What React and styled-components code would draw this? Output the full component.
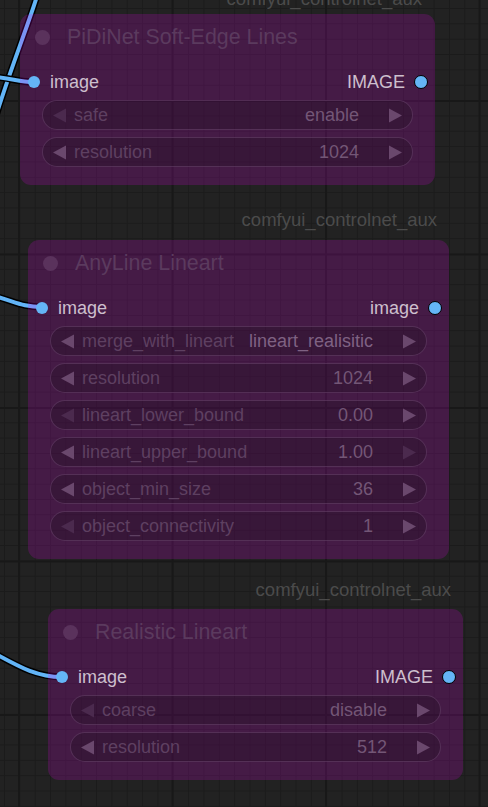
import React from "react";
import styled, { createGlobalStyle } from "styled-components";

const GlobalStyle = createGlobalStyle`
  html, body {
    margin: 0;
    padding: 0;
    background: #222222;
    overflow: hidden;
  }
  * { box-sizing: border-box; }
`;

const nodes = [
  {
    left: 20,
    top: 14,
    width: 415,
    title: "PiDiNet Soft-Edge Lines",
    output: "IMAGE",
    widgets: [
      { label: "safe", value: "enable", leftOff: true },
      { label: "resolution", value: "1024" },
    ],
  },
  {
    left: 28,
    top: 240,
    width: 421,
    title: "AnyLine Lineart",
    output: "image",
    widgets: [
      { label: "merge_with_lineart", value: "lineart_realisitic", bright: true },
      { label: "resolution", value: "1024" },
      { label: "lineart_lower_bound", value: "0.00", leftOff: true },
      { label: "lineart_upper_bound", value: "1.00", rightOff: true },
      { label: "object_min_size", value: "36" },
      { label: "object_connectivity", value: "1", leftOff: true },
    ],
  },
  {
    left: 48,
    top: 609,
    width: 415,
    title: "Realistic Lineart",
    output: "IMAGE",
    widgets: [
      { label: "coarse", value: "disable", leftOff: true },
      { label: "resolution", value: "512" },
    ],
  },
];

const Canvas = styled.div`
  position: relative;
  width: 488px;
  height: 807px;
  overflow: hidden;
  font-family: "Liberation Sans", Arial, sans-serif;
  background-color: #222222;
  background-image:
    linear-gradient(to right, #181818 0 2px, transparent 2px),
    linear-gradient(to bottom, #181818 0 2px, transparent 2px),
    linear-gradient(to right, #1b1b1b 0 1px, transparent 1px),
    linear-gradient(to bottom, #1b1b1b 0 1px, transparent 1px);
  background-size: 153.5px 153.5px, 153.5px 153.5px, 15.35px 15.35px,
    15.35px 15.35px;
  background-position: 18px 0, 0 100px, 4px 0, 0 8px;
`;

const Wires = styled.svg`
  position: absolute;
  inset: 0;
  width: 488px;
  height: 807px;
`;

const GroupLabel = styled.div`
  position: absolute;
  font-size: 18.5px;
  color: #4b4b4b;
  white-space: nowrap;
  transform: translateY(-50%);
`;

const Node = styled.div`
  position: absolute;
  border-radius: 11px;
  background: rgba(235, 0, 240, 0.18);
  padding: 0 22px 18px 22px;
  display: flex;
  flex-direction: column;
`;

const TitleBar = styled.div`
  height: 46px;
  display: flex;
  align-items: center;
  gap: 17px;
  margin-left: -7px;
`;

const TitleDot = styled.span`
  width: 15px;
  height: 15px;
  border-radius: 50%;
  background: #5a325c;
  flex: none;
`;

const TitleText = styled.span`
  font-size: 21.4px;
  color: #5b3a5e;
  white-space: nowrap;
`;

const SlotRow = styled.div`
  position: relative;
  height: 40px;
  padding-top: 4px;
  display: flex;
  align-items: center;
  justify-content: space-between;
  font-size: 18px;
  color: #cdbfcd;
`;

const SlotDot = styled.span`
  position: absolute;
  top: calc(50% + 2px);
  width: ${(p) => (p.out ? 14 : 12)}px;
  height: ${(p) => (p.out ? 14 : 12)}px;
  border-radius: 50%;
  background: #64b5f6;
  border: ${(p) => (p.out ? "1.5px solid #000" : "none")};
  transform: translate(-50%, -50%);
  left: ${(p) => (p.out ? "calc(100% + 8px)" : "-8px")};
`;

const SlotLabel = styled.span`
  margin-left: ${(p) => (p.out ? "0" : "8px")};
  margin-right: ${(p) => (p.out ? "8px" : "0")};
`;

const WidgetList = styled.div`
  display: flex;
  flex-direction: column;
  gap: 7px;
`;

const Widget = styled.div`
  height: 30px;
  border-radius: 15px;
  background: rgba(20, 10, 20, 0.25);
  border: 1px solid rgba(120, 80, 125, 0.45);
  display: flex;
  align-items: center;
  padding: 0 9px 0 9px;
  font-size: 18px;
`;

const Arrow = styled.svg`
  width: 15px;
  height: 15px;
  flex: none;
  fill: ${(p) => (p.off ? "#4b2a4e" : "#6a486d")};
`;

const WLabel = styled.span`
  margin-left: 7px;
  color: #5e4061;
  white-space: nowrap;
`;

const WValue = styled.span`
  margin-left: auto;
  margin-right: 29px;
  color: ${(p) => (p.bright ? "#7f6283" : "#735676")};
  white-space: nowrap;
`;

function LeftArrow({ off }) {
  return (
    <Arrow off={off} viewBox="0 0 15 15">
      <polygon points="1,7.5 14,0.5 14,14.5" />
    </Arrow>
  );
}

function RightArrow({ off }) {
  return (
    <Arrow off={off} viewBox="0 0 15 15">
      <polygon points="14,7.5 1,0.5 1,14.5" />
    </Arrow>
  );
}

function GraphNode({ node }) {
  return (
    <Node style={{ left: node.left, top: node.top, width: node.width }}>
      <TitleBar>
        <TitleDot />
        <TitleText>{node.title}</TitleText>
      </TitleBar>
      <SlotRow>
        <SlotDot />
        <SlotLabel>image</SlotLabel>
        <SlotLabel out>{node.output}</SlotLabel>
        <SlotDot out />
      </SlotRow>
      <WidgetList>
        {node.widgets.map((w) => (
          <Widget key={w.label}>
            <LeftArrow off={w.leftOff} />
            <WLabel>{w.label}</WLabel>
            <WValue bright={w.bright}>{w.value}</WValue>
            <RightArrow off={w.rightOff} />
          </Widget>
        ))}
      </WidgetList>
    </Node>
  );
}

const wirePaths = [
  "M 37 -4 C 30 20, 10 70, -4 116",
  "M -6 77 C 12 78, 18 82, 34 82",
  "M -6 296 C 14 301, 22 307, 42 307",
  "M -6 653 C 18 666, 36 677, 62 677",
];

export default function App() {
  return (
    <>
      <GlobalStyle />
      <Canvas>
        <Wires viewBox="0 0 488 807">
          {wirePaths.map((d) => (
            <g key={d}>
              <path d={d} stroke="#000" strokeWidth="7" fill="none" />
              <path d={d} stroke="#62b4f7" strokeWidth="4" fill="none" />
            </g>
          ))}
        </Wires>
        <GroupLabel style={{ right: 488 - 422, top: -1 }}>
          comfyui_controlnet_aux
        </GroupLabel>
        <GroupLabel style={{ right: 488 - 437, top: 220 }}>
          comfyui_controlnet_aux
        </GroupLabel>
        <GroupLabel style={{ right: 488 - 451, top: 590 }}>
          comfyui_controlnet_aux
        </GroupLabel>
        {nodes.map((n) => (
          <GraphNode key={n.title} node={n} />
        ))}
      </Canvas>
    </>
  );
}
